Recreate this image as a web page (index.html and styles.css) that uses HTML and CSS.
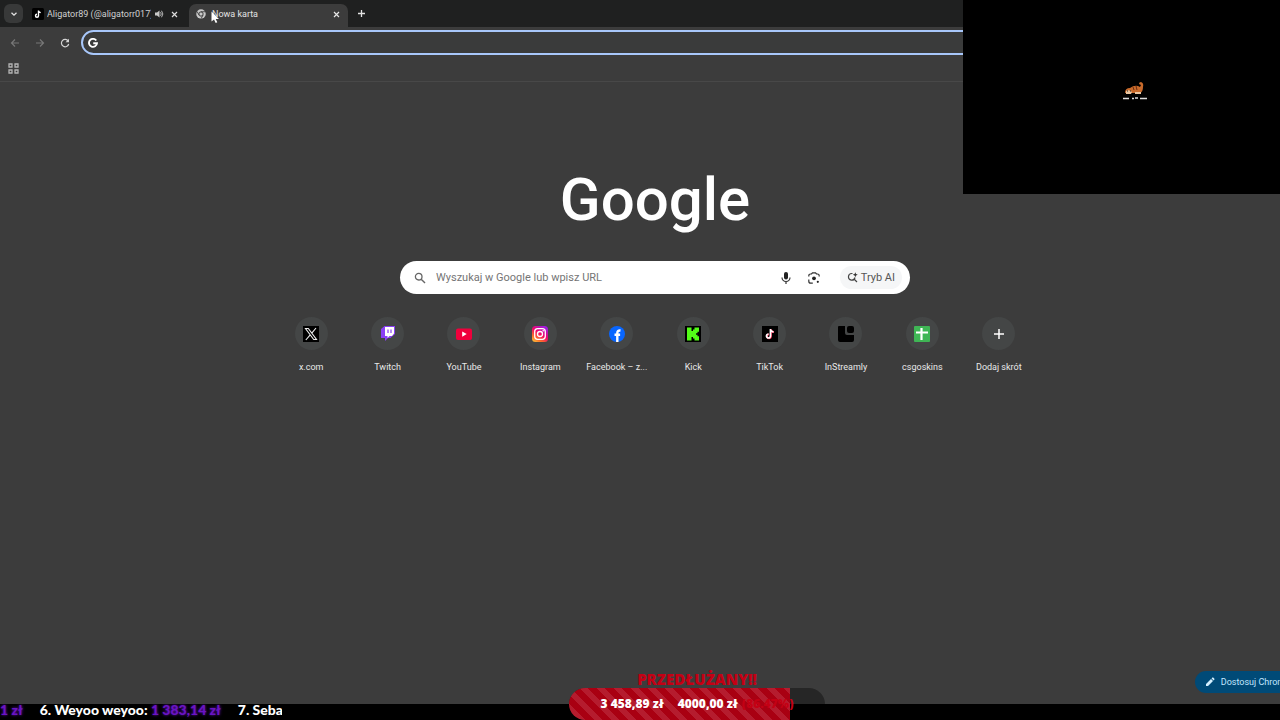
FILE: index.html
```html
<!DOCTYPE html>
<html lang="pl">
<head>
  <meta charset="UTF-8">
  <meta name="viewport" content="width=device-width, initial-scale=1.0">
  <title>Nowa karta</title>
  <link rel="stylesheet" href="styles.css">
</head>
<body>
  <div class="browser">
    <div class="tab-strip">
      <button class="tab-search" aria-label="Szukaj kart">
        <svg width="8" height="8" viewBox="0 0 8 8"><path d="M1.5 2.7 4 5.2 6.5 2.7" fill="none" stroke="#e3e3e3" stroke-width="1.3"/></svg>
      </button>
      <div class="tab">
        <svg width="12" height="12" viewBox="0 0 24 24"><rect width="24" height="24" rx="3" fill="#000"/><path d="M13 5v10.500a3 3 0 1 1-3-3M13 5c.3 2.600 2 4 4.500 4.200" fill="none" stroke="#fff" stroke-width="2.800"/></svg>
        <span class="tab-title">Aligator89 (@aligatorr017)</span>
        <svg class="sound" width="10" height="10" viewBox="0 0 20 20"><path d="M2 7h4l5-4v14l-5-4H2z" fill="#c7c7c7"/><path d="M13 6.500q3 3.500 0 7M15 3.500q5.500 6.500 0 13" fill="none" stroke="#c7c7c7" stroke-width="1.800"/></svg>
        <button class="close" aria-label="Zamknij kartę"><svg width="7" height="7" viewBox="0 0 7 7"><path d="M1 1l5 5M6 1 1 6" stroke="#dcdcdc" stroke-width="1.200"/></svg></button>
      </div>
      <div class="tab active">
        <svg width="10" height="10" viewBox="0 0 20 20"><circle cx="10" cy="10" r="9.500" fill="#c9c9c9"/><circle cx="10" cy="10" r="4.300" fill="#c9c9c9" stroke="#3c3c3c" stroke-width="2"/><path d="M10 5.500h8.500M6.200 12.300 2 5M14 12.300 10 19.500" stroke="#3c3c3c" stroke-width="1.700"/></svg>
        <span class="tab-title">Nowa karta</span>
        <button class="close" aria-label="Zamknij kartę"><svg width="7" height="7" viewBox="0 0 7 7"><path d="M1 1l5 5M6 1 1 6" stroke="#e8e8e8" stroke-width="1.200"/></svg></button>
      </div>
      <button class="new-tab" aria-label="Nowa karta"><svg width="9" height="9" viewBox="0 0 9 9"><path d="M4.500 1v7M1 4.500h7" stroke="#e3e3e3" stroke-width="1.300"/></svg></button>
    </div>

    <div class="toolbar">
      <button class="nav" aria-label="Wstecz" disabled><svg width="10" height="10" viewBox="0 0 10 10"><path d="M9 5H1.500M5 1.500 1.500 5 5 8.500" fill="none" stroke="#777" stroke-width="1.200"/></svg></button>
      <button class="nav" aria-label="Dalej" disabled><svg width="10" height="10" viewBox="0 0 10 10"><path d="M1 5h7.500M5 1.500 8.500 5 5 8.500" fill="none" stroke="#777" stroke-width="1.200"/></svg></button>
      <button class="nav" aria-label="Odśwież"><svg width="10" height="10" viewBox="0 0 10 10"><path d="M8.200 3A3.700 3.700 0 1 0 8.700 6" fill="none" stroke="#d5d5d5" stroke-width="1.200"/><path d="M9 .700v3.500H5.500z" fill="#d5d5d5"/></svg></button>
      <div class="omnibox">
        <svg width="10" height="10" viewBox="0 0 20 20"><path d="M16.500 5A8 8 0 1 0 18 10.500H10.500" fill="none" stroke="#fff" stroke-width="3.800"/></svg>
        <input class="address" type="text" aria-label="Pasek adresu">
      </div>
    </div>

    <div class="bookmarks">
      <button class="apps" aria-label="Wszystkie aplikacje"><svg width="11" height="11" viewBox="0 0 11 11"><path d="M1 1h3v3H1zM7 1h3v3H7zM1 7h3v3H1zM7 7h3v3H7z" fill="none" stroke="#b4b4b4" stroke-width="1.300"/></svg></button>
    </div>

    <main class="new-tab-page">
      <h1 class="logo">Google</h1>

      <form class="search">
        <svg width="12" height="12" viewBox="0 0 12 12"><circle cx="4.700" cy="4.700" r="3.300" fill="none" stroke="#666" stroke-width="1.300"/><path d="M7.200 7.200 11 11" stroke="#666" stroke-width="1.400"/></svg>
        <input class="query" type="text" placeholder="Wyszukaj w Google lub wpisz URL" aria-label="Wyszukaj w Google lub wpisz URL">
        <button type="button" class="tool" aria-label="Wyszukiwanie głosowe"><svg width="12" height="14" viewBox="0 0 12 14"><rect x="4" y="1" width="4" height="7.500" rx="2" fill="#222"/><path d="M2 6.500a4 4 0 0 0 8 0M6 10.500V13" fill="none" stroke="#333" stroke-width="1.200"/></svg></button>
        <button type="button" class="tool" aria-label="Szukaj obrazem"><svg width="12" height="12" viewBox="0 0 12 12"><path d="M.8 4.500V3.800q0-1.800 1.800-1.800H3.500L4.500.800h3L8.500 2h.9q1.800 0 1.800 1.800v.7M.8 7.500v1.700q0 2 2 2h2" fill="none" stroke="#333" stroke-width="1.200"/><circle cx="6" cy="6.300" r="1.900" fill="#222"/><circle cx="9.800" cy="9.800" r="1.100" fill="#222"/></svg></button>
        <button type="button" class="ai-mode">
          <svg width="11" height="11" viewBox="0 0 11 11"><path d="M5.500 1.500H4.800A3.300 3.300 0 1 0 8 5.500M7 7l3 3" fill="none" stroke="#444" stroke-width="1.200"/><path d="M8.300.200 9 2l1.800.700L9 3.400l-.7 1.800-.7-1.800-1.800-.7L7.600 2z" fill="#333"/></svg>
          Tryb AI
        </button>
      </form>

      <nav class="shortcuts">
        <a class="shortcut" href="#">
          <span class="tile"><svg width="16" height="16" viewBox="0 0 16 16"><rect width="16" height="16" fill="#000"/><path d="M2.500 2.500h2.800l8.200 11h-2.800zM13 2 9 6.800M7 9.200 2.800 14" fill="none" stroke="#eee" stroke-width="1.100"/></svg></span>
          <span>x.com</span>
        </a>
        <a class="shortcut" href="#">
          <span class="tile"><svg width="16" height="16" viewBox="0 0 16 16"><path d="M4.500 0 1 3v9h4v3l3-3h2.500L15 8V0z" fill="#8a3ff5"/><path d="M5 1h9v6.500L12 10H9.500L7.500 12v-2H5z" fill="#fff"/><path d="M8 3.500V7M11 3.500V7" stroke="#8a3ff5" stroke-width="1.200"/></svg></span>
          <span>Twitch</span>
        </a>
        <a class="shortcut" href="#">
          <span class="tile"><svg width="16" height="16" viewBox="0 0 16 16"><rect y="2.500" width="16" height="11.500" rx="2" fill="#f0003c"/><path d="M6.200 5.500v5.200L10.700 8z" fill="#fff"/></svg></span>
          <span>YouTube</span>
        </a>
        <a class="shortcut" href="#">
          <span class="tile"><svg width="16" height="16" viewBox="0 0 16 16"><defs><linearGradient id="insta" x1="0" y1="1" x2=".7" y2="0"><stop offset="0" stop-color="#ffd13b"/><stop offset=".3" stop-color="#fb6b2c"/><stop offset=".6" stop-color="#f0066b"/><stop offset="1" stop-color="#a01be0"/></linearGradient></defs><rect width="16" height="16" rx="3.500" fill="url(#insta)"/><rect x="2.700" y="2.700" width="10.600" height="10.600" rx="3" fill="none" stroke="#fff" stroke-width="1.300"/><circle cx="8" cy="8" r="2.500" fill="none" stroke="#fff" stroke-width="1.300"/><circle cx="11.200" cy="4.800" r=".8" fill="#fff"/></svg></span>
          <span>Instagram</span>
        </a>
        <a class="shortcut" href="#">
          <span class="tile"><svg width="16" height="16" viewBox="0 0 16 16"><circle cx="8" cy="8" r="8" fill="#0866ff"/><path d="M8.300 16V7q0-2.800 3.200-2.500M5.500 8.700h5.600" fill="none" stroke="#fff" stroke-width="2.400"/></svg></span>
          <span>Facebook – z...</span>
        </a>
        <a class="shortcut" href="#">
          <span class="tile"><svg width="16" height="16" viewBox="0 0 16 16"><rect width="16" height="16" fill="#000"/><path d="M2 1.500h4.500V5H8V3.500h1.500v-2H14v4.300h-1.500v1.500H11v1.500h1.500v1.500H14v4.200H9.500v-2H8V11H6.500v3.500H2z" fill="#53fc18"/></svg></span>
          <span>Kick</span>
        </a>
        <a class="shortcut" href="#">
          <span class="tile"><svg width="16" height="16" viewBox="0 0 24 24"><rect width="24" height="24" fill="#000"/><path d="M13.500 5v10.500a3 3 0 1 1-3-3M13.500 5c.3 2.600 2 4 4.500 4.200" fill="none" stroke="#ff2d55" stroke-width="2.600"/><path d="M12.700 4.500V15a3 3 0 1 1-3-3M12.700 4.500c.3 2.600 2 4 4.500 4.200" fill="none" stroke="#fff" stroke-width="2.600"/></svg></span>
          <span>TikTok</span>
        </a>
        <a class="shortcut" href="#">
          <span class="tile"><svg width="16" height="16" viewBox="0 0 16 16"><path d="M1 0h6v7q0 2 2 2h7v5q0 2-2 2H2q-2 0-2-2V1q0-1 1-1z" fill="#000"/><rect x="9" width="7" height="7" rx="2" fill="#000"/></svg></span>
          <span>InStreamly</span>
        </a>
        <a class="shortcut" href="#">
          <span class="tile"><svg width="16" height="16" viewBox="0 0 16 16"><rect width="16" height="16" rx="1" fill="#3fb655"/><path d="M2 6.500h12M7.500 2v12" stroke="#fff" stroke-width="2.200"/></svg></span>
          <span>csgoskins</span>
        </a>
        <a class="shortcut" href="#">
          <span class="tile"><svg width="16" height="16" viewBox="0 0 16 16"><path d="M8 3v10M3 8h10" stroke="#fff" stroke-width="1.500"/></svg></span>
          <span>Dodaj skrót</span>
        </a>
      </nav>
    </main>

    <button class="customize">
      <svg width="10" height="10" viewBox="0 0 10 10"><path d="M1 9V7l5-5 2 2-5 5zM6.600 1.400l.8-.8q.4-.4.800 0L9.400 1.800q.4.400 0 .8l-.8.8z" fill="#d3efff"/></svg>
      Dostosuj Chrome
    </button>
  </div>

  <footer class="ticker">
    <div class="ticker-track">
      <span class="amount">1 zł</span>
      <span class="donor">6. Weyoo weyoo: <span class="amount">1 383,14 zł</span></span>
      <span class="donor">7. Seba</span>
    </div>
  </footer>

  <!-- stream overlays -->
  <div class="camera">
    <svg width="26" height="20" viewBox="0 0 26 20"><path d="M3 12q0-5 5-5 4-3 8-2l2 1 1-2-2-1q0-2 2-2 3 1 2 5 0 5-3 6H4z" fill="#c86a2b"/><path d="M4 10q3-2 6 1l-1 2H4zM13 11h6v2h-6z" fill="#e9c6a1"/><path d="M11 6l1 3M14 5l1 4" stroke="#6b2c10"/><path d="M5 10h1M8 10h1" stroke="#222"/><path d="M1 17.500h6M10 17.500h2M13 17h3M18 17.500h7" stroke="#ddd" stroke-width="1.500"/></svg>
  </div>
  <div class="goal">
    <div class="goal-title">PRZEDŁUŻANY!!</div>
    <div class="goal-bar">
      <div class="goal-fill"></div>
      <div class="goal-text"><span>3 458,89 zł</span><span>4000,00 zł</span><span class="percent">(86.47%)</span></div>
    </div>
  </div>
  <svg class="cursor" width="8" height="13" viewBox="0 0 8 13"><path d="M.5.500v10L3 8.500 4.700 12l1.600-.8L4.700 8H8z" fill="#fff"/></svg>
</body>
</html>
```
FILE: styles.css
```css
* {
  box-sizing: border-box;
}

body {
  margin: 0;
  position: relative;
  min-height: 100vh;
  display: flex;
  flex-direction: column;
  overflow: hidden;
  background: #000;
  color: #e3e3e3;
  font-family: Roboto, 'Noto Sans', sans-serif;
  font-size: 9px;
}

button,
input {
  border: 0;
  padding: 0;
  background: none;
  color: inherit;
  font: inherit;
}

input {
  outline: none;
  min-width: 0;
}

svg {
  display: block;
  flex: none;
}

/* the window runs past the right edge of the screen */
.browser {
  flex: 1;
  position: relative;
  width: calc(100% + 30px);
  display: flex;
  flex-direction: column;
  background: #3c3c3c;
}

.tab-strip {
  height: 27px;
  display: flex;
  align-items: flex-end;
  padding-left: 4px;
  background: #1f2020;
}

.tab-search {
  width: 19px;
  height: 19px;
  margin-bottom: 4px;
  border-radius: 6px;
  display: grid;
  place-items: center;
  background: #383939;
}

.tab {
  width: 166px;
  height: 23px;
  display: flex;
  align-items: center;
  gap: 3px;
  padding: 0 11px 3px 9px;
  color: #d0d0d0;
}

.tab.active {
  width: 159px;
  padding: 0 8px 3px 7px;
  gap: 6px;
  border-radius: 7px 7px 0 0;
  background: #3c3c3c;
  color: #e3e3e3;
}

.tab-title {
  flex: 1;
  overflow: hidden;
  white-space: nowrap;
}

.sound {
  margin-right: 4px;
}

.close {
  display: grid;
  place-items: center;
}

.new-tab {
  margin: 0 0 9px 9px;
}

.toolbar {
  display: flex;
  align-items: center;
  gap: 15px;
  padding: 3px 10px 1px;
}

.nav {
  width: 10px;
  display: grid;
  place-items: center;
}

.omnibox {
  flex: 1;
  height: 25px;
  display: flex;
  align-items: center;
  gap: 8px;
  padding: 0 5px;
  margin-left: -4px;
  border: 2px solid #a8c7fa;
  border-radius: 13px;
  background: #3a3b3b;
}

.address {
  flex: 1;
}

.bookmarks {
  height: 26px;
  display: flex;
  align-items: center;
  padding: 0 8px;
  border-bottom: 1px solid #484848;
}

.new-tab-page {
  flex: 1;
  display: flex;
  flex-direction: column;
  align-items: center;
  padding-top: 80px;
}

.logo {
  margin: 0;
  color: #fff;
  font-family: Roboto, sans-serif;
  font-size: 60px;
  font-weight: 500;
  line-height: 76px;
}

.search {
  width: 510px;
  height: 33px;
  margin-top: 23px;
  display: flex;
  align-items: center;
  gap: 16px;
  padding: 0 8px 0 14px;
  border-radius: 17px;
  background: #fff;
  color: #555;
  font-size: 11px;
}

.query {
  flex: 1;
  margin-left: -6px;
}

.query::placeholder {
  color: #757575;
  opacity: 1;
}

.ai-mode {
  height: 23px;
  display: flex;
  align-items: center;
  gap: 3px;
  padding: 0 7px;
  margin-left: 4px;
  border-radius: 12px;
  background: #f5f6f7;
}

.shortcuts {
  width: 764px;
  margin-top: 23px;
  display: grid;
  grid-template-columns: repeat(10, 1fr);
}

.shortcut {
  display: flex;
  flex-direction: column;
  align-items: center;
  gap: 10px;
  color: #e8e8e8;
  line-height: 14px;
  text-decoration: none;
  white-space: nowrap;
}

.tile {
  width: 33px;
  height: 33px;
  border-radius: 50%;
  display: grid;
  place-items: center;
  background: #444646;
}

.customize {
  position: absolute;
  right: 10px;
  bottom: 11px;
  height: 22px;
  display: flex;
  align-items: center;
  gap: 6px;
  padding: 0 10px;
  border-radius: 11px;
  background: #004a77;
  color: #c2e7ff;
  white-space: nowrap;
}

.ticker {
  width: 22%;
  height: 16px;
  overflow: hidden;
  color: #fff;
  font-family: Lato, sans-serif;
  font-size: 14px;
  font-weight: 900;
  line-height: 12px;
}

.ticker-track {
  display: flex;
  gap: 17px;
  white-space: nowrap;
}

.amount {
  color: #6a14c4;
  text-shadow: 0 0 3px #6a14c4;
}

.camera {
  position: absolute;
  top: 0;
  right: 0;
  width: 317px;
  height: 194px;
  display: grid;
  place-items: center;
  padding: 0 0 12px 26px;
  background: #000;
}

.goal {
  position: absolute;
  left: 569px;
  bottom: 0;
  width: 256px;
  font-family: 'Open Sans', sans-serif;
  font-weight: 800;
}

.goal-title {
  color: #c40014;
  font-size: 15px;
  line-height: 18px;
  text-align: center;
}

.goal-bar {
  position: relative;
  height: 32px;
  overflow: hidden;
  border-radius: 16px;
  background: linear-gradient(#262626 50%, #000 50%);
}

.goal-fill {
  width: 86.47%;
  height: 100%;
  background: repeating-linear-gradient(45deg, #a90012 0 6px, #b51c2e 6px 12px);
}

.goal-text {
  position: absolute;
  inset: 0;
  display: flex;
  justify-content: center;
  gap: 14px;
  color: #fff;
  font-size: 12px;
  line-height: 32px;
  white-space: nowrap;
}

.percent {
  margin-left: -10px;
  color: #c40014;
}

.cursor {
  position: absolute;
  left: 211px;
  top: 11px;
}
```
